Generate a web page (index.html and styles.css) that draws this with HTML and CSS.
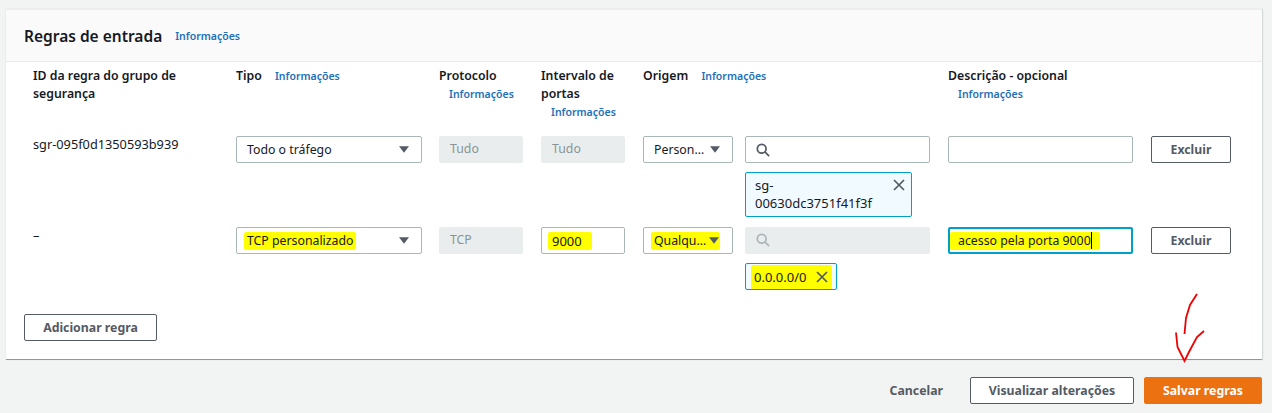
FILE: index.html
```html
<!DOCTYPE html>
<html lang="pt-BR">
  <head>
    <meta name="viewport" content="width=device-width, initial-scale=1.0">
    <meta charset="utf-8">
    <title>Regras de entrada</title>
    <link rel="stylesheet" href="styles.css">
  </head>
  <body>
    <main class="page">
      <section class="card">
        <header class="card-head">
          <h2>Regras de entrada</h2>
          <a class="info" href="#">Informações</a>
        </header>
        <div class="card-body">
          <div class="rule-grid head-row">
            <div>ID da regra do grupo de segurança</div>
            <div>Tipo <a class="info" href="#">Informações</a></div>
            <div>Protocolo <a class="info" href="#">Informações</a></div>
            <div>Intervalo de portas <a class="info" href="#">Informações</a></div>
            <div>Origem <a class="info" href="#">Informações</a></div>
            <div>Descrição - opcional <a class="info" href="#">Informações</a></div>
            <div></div>
          </div>

          <div class="rule-grid rule-row">
            <div class="rule-id">sgr-095f0d1350593b939</div>
            <div class="select">
              <span>Todo o tráfego</span>
              <svg class="caret" viewBox="0 0 12 8"><path d="M0 0h12L6 8z"/></svg>
            </div>
            <div class="field off">Tudo</div>
            <div class="field off">Tudo</div>
            <div class="origin">
              <div class="select narrow">
                <span>Person…</span>
                <svg class="caret" viewBox="0 0 12 8"><path d="M0 0h12L6 8z"/></svg>
              </div>
              <div class="search-col">
                <div class="field search">
                  <svg class="glass" viewBox="0 0 16 16"><circle cx="6.5" cy="6.5" r="5"/><path d="M10.2 10.2L15 15"/></svg>
                </div>
                <div class="chip tall">
                  <span>sg-<br>00630dc3751f41f3f</span>
                  <svg class="close" viewBox="0 0 12 12"><path d="M1 1l10 10M11 1L1 11"/></svg>
                </div>
              </div>
            </div>
            <div class="field"></div>
            <button class="btn">Excluir</button>
          </div>

          <div class="rule-grid rule-row">
            <div class="rule-id">–</div>
            <div class="select">
              <span class="mark mark-type">TCP personalizado</span>
              <svg class="caret" viewBox="0 0 12 8"><path d="M0 0h12L6 8z"/></svg>
            </div>
            <div class="field off">TCP</div>
            <div class="field"><span class="mark mark-num">9000</span></div>
            <div class="origin">
              <div class="select narrow any">
                <span class="mark mark-any">Qualqu…<svg class="caret" viewBox="0 0 12 8"><path d="M0 0h12L6 8z"/></svg></span>
              </div>
              <div class="search-col">
                <div class="field search off">
                  <svg class="glass" viewBox="0 0 16 16"><circle cx="6.5" cy="6.5" r="5"/><path d="M10.2 10.2L15 15"/></svg>
                </div>
                <div class="chip short">
                  <span class="mark mark-chip">0.0.0.0/0<svg class="close" viewBox="0 0 12 12"><path d="M1 1l10 10M11 1L1 11"/></svg></span>
                </div>
              </div>
            </div>
            <div class="field focus"><span class="mark mark-desc">acesso pela porta 9000<i class="text-caret"></i></span></div>
            <button class="btn">Excluir</button>
          </div>

          <button class="btn add">Adicionar regra</button>
        </div>
      </section>

      <footer class="actions">
        <a class="cancel" href="#">Cancelar</a>
        <button class="btn preview">Visualizar alterações</button>
        <button class="btn primary">Salvar regras</button>
      </footer>
    </main>

    <svg class="scribble" viewBox="0 0 40 80" width="40" height="80">
      <path d="M27 2L20 13L16 26L14.500 42"/>
      <path d="M6 40.500L7.500 55L14.500 69L20 58L27 45L34 39"/>
    </svg>
  </body>
</html>
```

FILE: styles.css
```css
*,*::before,*::after {
  box-sizing: border-box;
}

html, body {
  height: 100%;
  margin: 0;
  padding: 0;
  overflow: hidden;
}

body {
  position: relative;
  background: #f2f3f3;
  color: #16191f;
  font-family: "Noto Sans", sans-serif;
  font-size: 12.300px;
  line-height: 18px;
}

a {
  text-decoration: none;
}

.page {
  padding: 9px 10px 0 6px;
}

.card {
  background: #fff;
  border-top: 1px solid #eaeded;
  border-bottom: 1px solid #8d9a9b;
  box-shadow: 1px 0 1px #d5dbdb, -1px 0 1px #eaeded;
  height: 351px;
}

.card-head {
  display: flex;
  align-items: center;
  gap: 13px;
  height: 52px;
  padding: 0 18px;
  background: #fafafa;
  border-bottom: 1px solid #eaeded;
}

.card-head h2 {
  margin: 0;
  font-size: 15.500px;
  font-weight: 600;
}

.info {
  color: #1f70b8;
  font-size: 10.500px;
  font-weight: 600;
  margin-left: 10px;
  white-space: nowrap;
}

.card-head .info {
  margin-left: 0;
}

.card-body {
  padding: 5px 0 0 18px;
}

.rule-grid {
  display: grid;
  grid-template-columns: 185px 185px 84px 84px 287px 185px 80px;
  column-gap: 18px;
  align-items: start;
  margin-left: 9px;
}

.head-row {
  font-weight: 600;
  height: 69px;
}

.rule-row {
  margin-bottom: 10px;
}

.rule-row > .select {
  width: 186px;
}

.rule-id {
  margin-top: -1px;
  font-size: 12.750px;
}

.select, .field, .btn, .chip {
  border-radius: 2px;
  font-family: inherit;
  font-size: 12.300px;
}

.select, .field {
  display: flex;
  align-items: center;
  height: 27px;
  background: #fff;
  border: 1px solid #aab7b8;
  padding: 0 10px;
}

.select {
  justify-content: space-between;
  padding-right: 12px;
}

.caret {
  width: 10px;
  height: 7px;
  flex: none;
  fill: #545b64;
}

.field.off {
  background: #eaeded;
  border-color: #eaeded;
  color: #879596;
  padding-bottom: 2px;
}

.field.focus {
  border: 2px solid #00a1c9;
  padding: 0;
}

.origin {
  display: flex;
  gap: 12px;
}

.narrow {
  width: 90px;
  flex: none;
}

.search-col {
  width: 185px;
}

.glass {
  width: 14px;
  height: 14px;
  fill: none;
  stroke: #545b64;
  stroke-width: 2;
}

.off .glass {
  stroke: #aab7b8;
}

.chip {
  display: flex;
  justify-content: space-between;
  margin-top: 9px;
  background: #f1faff;
  border: 1px solid #00a1c9;
  font-size: 13px;
}

.chip.tall {
  width: 167px;
  height: 45px;
  padding: 3px 6px 0 9px;
}

.chip.short {
  width: 92px;
  height: 27px;
  align-items: center;
  padding: 0 0 0 5px;
}

.close {
  width: 12px;
  height: 12px;
  flex: none;
  fill: none;
  stroke: #545b64;
  stroke-width: 1.700;
  margin-top: 3px;
}

.mark {
  background: #ffff00;
  border-radius: 2px;
  display: inline-flex;
  align-items: center;
}

.mark .close {
  margin: 0 0 0 10px;
}

.mark-type {
  margin-left: -3px;
  padding: 0 3px;
}

.mark-any {
  width: 77px;
  justify-content: space-between;
  margin-left: -3px;
  padding-left: 3px;
  padding-right: 1px;
}

.mark-num {
  width: 44px;
  margin-left: -4px;
  padding-left: 4px;
  font-size: 13px;
}

.mark-chip {
  padding: 3px 4px 3px 3px;
}

.mark-desc {
  padding: 0 8px 0 8px;
}

.text-caret {
  display: inline-block;
  width: 1px;
  height: 17px;
  background: #000;
}

.btn {
  height: 27px;
  background: #fff;
  border: 1px solid #545b64;
  color: #545b64;
  font-weight: 700;
  padding: 0 0 1px;
  cursor: pointer;
}

.add {
  width: 133px;
  margin-top: 14px;
}

.actions {
  display: flex;
  justify-content: flex-end;
  align-items: center;
  height: 27px;
  margin-top: 17px;
}

.cancel {
  color: #545b64;
  font-weight: 700;
  margin-right: 27px;
}

.preview {
  width: 164px;
  margin-right: 10px;
}

.primary {
  width: 118px;
  background: #ec7211;
  border-color: #ec7211;
  color: #fff;
}

/* seta vermelha desenhada por cima do print */
.scribble {
  position: absolute;
  left: 1170px;
  top: 292px;
  fill: none;
  stroke: #f00000;
  stroke-width: 1.800;
}
```
